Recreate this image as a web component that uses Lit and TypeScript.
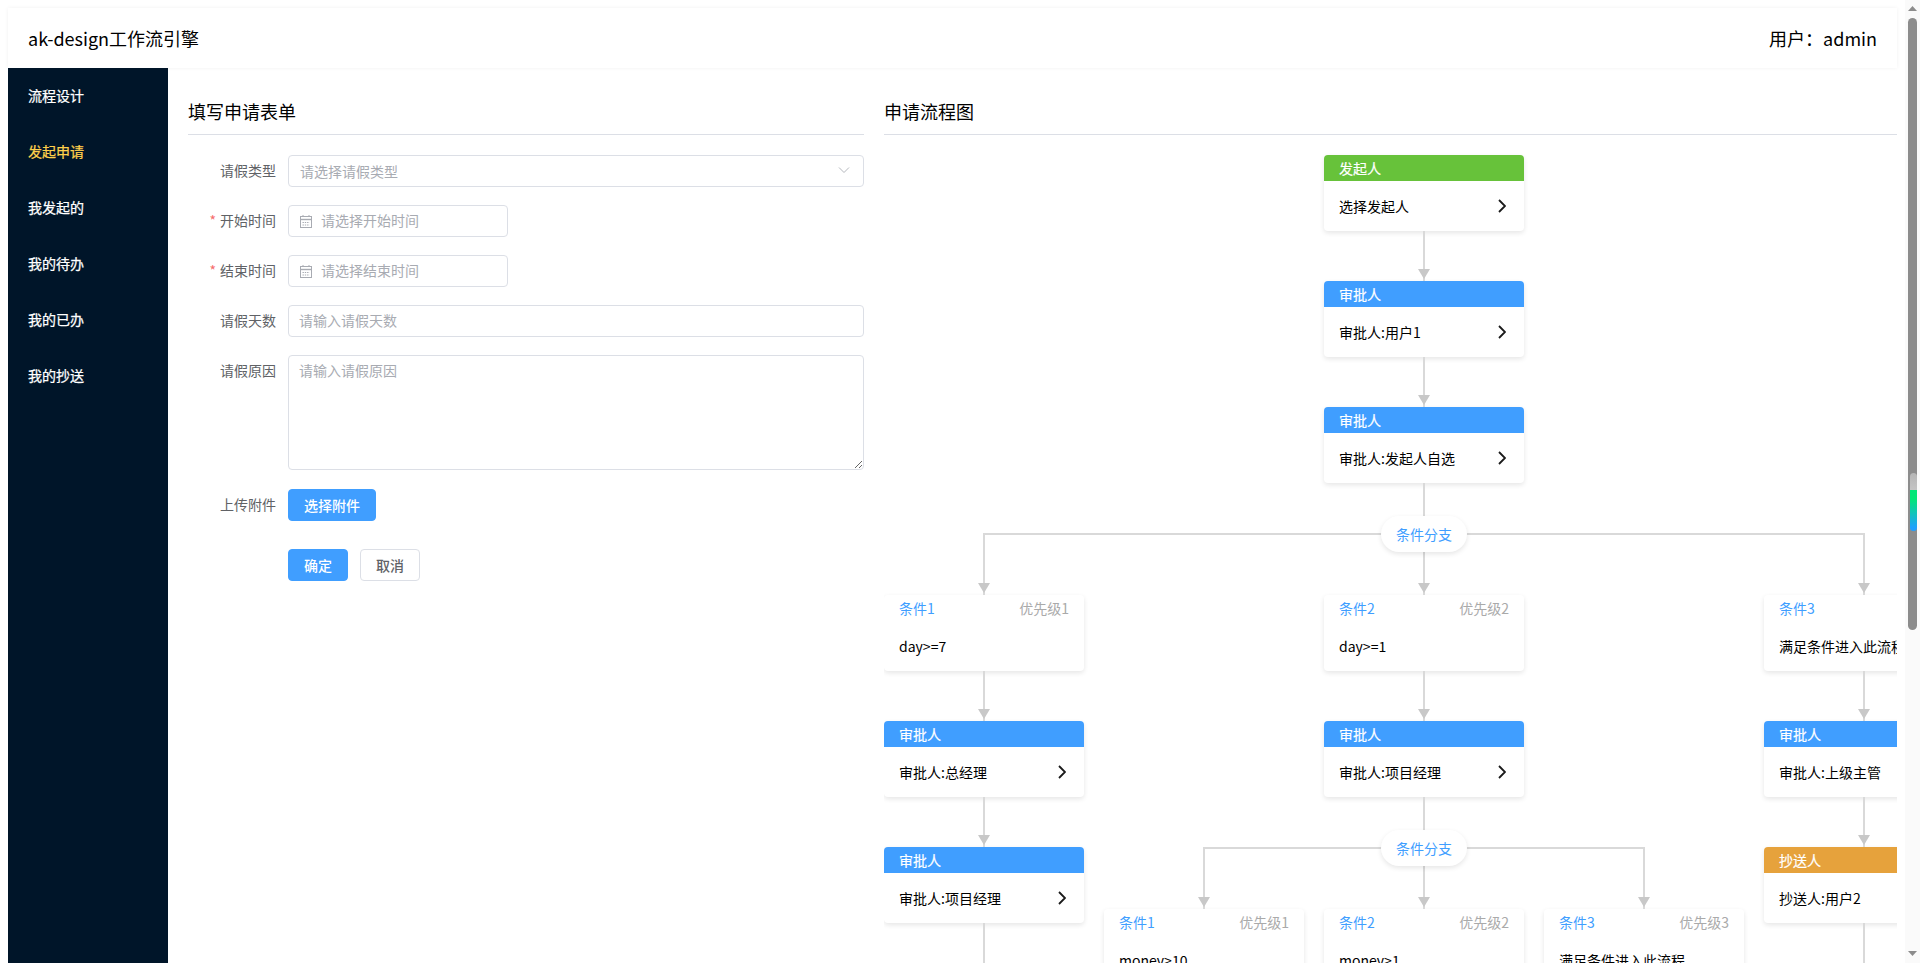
import { LitElement, html, css, nothing } from "lit";
import { customElement } from "lit/decorators.js";

type Tone = "start" | "audit" | "copy";

type Step =
  | { kind: "node"; tone: Tone; title: string; text: string }
  | { kind: "cond"; title: string; level: string; text: string }
  | { kind: "branch"; cols: Step[][] };

const audit = (text: string): Step => ({
  kind: "node",
  tone: "audit",
  title: "审批人",
  text: `审批人:${text}`,
});

const cond = (n: number, text: string): Step => ({
  kind: "cond",
  title: `条件${n}`,
  level: `优先级${n}`,
  text,
});

const flow: Step[] = [
  { kind: "node", tone: "start", title: "发起人", text: "选择发起人" },
  audit("用户1"),
  audit("发起人自选"),
  {
    kind: "branch",
    cols: [
      [cond(1, "day>=7"), audit("总经理"), audit("项目经理")],
      [
        cond(2, "day>=1"),
        audit("项目经理"),
        {
          kind: "branch",
          cols: [
            [cond(1, "money>10")],
            [cond(2, "money>1")],
            [cond(3, "满足条件进入此流程")],
          ],
        },
      ],
      [
        cond(3, "满足条件进入此流程"),
        audit("上级主管"),
        { kind: "node", tone: "copy", title: "抄送人", text: "抄送人:用户2" },
      ],
    ],
  },
];

const menu = ["流程设计", "发起申请", "我发起的", "我的待办", "我的已办", "我的抄送"];

const calendar = html`<svg class="cal" viewBox="0 0 12 13" width="12" height="13" fill="none" stroke="#a8abb2">
  <rect x=".5" y="1.5" width="11" height="11"></rect>
  <path d="M3 0v2M9 0v2" stroke-width="1"></path>
  <path d="M1 4.5h10" stroke-width="1.4"></path>
  <path d="M2.5 7.5h7M2.5 10h7" stroke-dasharray="1.4 .9"></path>
</svg>`;

@customElement("app-root")
export class AppRoot extends LitElement {
  static styles = css`
    :host {
      display: block;
      position: relative;
      box-sizing: border-box;
      height: 100vh;
      overflow: hidden;
      padding: 8px 23px 0 8px;
      background: #fff;
      color: #000;
      font-family: "Noto Sans CJK SC", "Noto Sans", sans-serif;
      font-size: 14px;
    }

    .top {
      display: flex;
      align-items: center;
      justify-content: space-between;
      height: 60px;
      padding: 0 20px;
      font-size: 18px;
      box-shadow: 0 0 4px rgba(0, 0, 0, 0.06);
    }

    .layout {
      display: flex;
    }

    .side {
      flex: 0 0 160px;
      background: #001529;
    }

    .side div {
      height: 56px;
      line-height: 55px;
      padding-left: 20px;
      color: #fff;
      -webkit-text-stroke: 0.25px currentColor;
    }

    .side .on {
      color: #ffd04b;
    }

    .content {
      flex: 1;
      min-width: 0;
      display: flex;
      gap: 20px;
      padding: 20px 0 0 20px;
    }

    .form-panel {
      flex: 0 0 676px;
    }

    .flow-panel {
      flex: 1;
      min-width: 0;
      overflow: hidden;
    }

    h2 {
      margin: 0 0 20px;
      padding: 11px 0;
      font-size: 18px;
      font-weight: 400;
      line-height: 24px;
      border-bottom: 1px solid #dcdfe6;
    }

    .row {
      display: flex;
      margin-bottom: 18px;
    }

    .row label {
      flex: 0 0 100px;
      box-sizing: border-box;
      padding-right: 12px;
      text-align: right;
      line-height: 30px;
      color: #606266;
    }

    .req::before {
      content: "*";
      margin-right: 4px;
      color: #f56c6c;
    }

    .box {
      flex: 1;
      display: flex;
      align-items: center;
      box-sizing: border-box;
      height: 32px;
      padding: 0 11px;
      border: 1px solid #dcdfe6;
      border-radius: 4px;
      background: #fff;
    }

    .box.date {
      flex: 0 0 220px;
    }

    .box span {
      flex: 1;
      color: #a8abb2;
    }

    .box svg.chev {
      margin-right: 2px;
    }

    .box input {
      flex: 1;
      min-width: 0;
      margin-left: -1px;
      padding: 0 0 2px;
      border: 0;
      outline: 0;
      font: inherit;
    }

    .cal {
      margin-right: 10px;
    }

    textarea {
      flex: 1;
      box-sizing: border-box;
      height: 115px;
      padding: 3px 10px;
      border: 1px solid #dcdfe6;
      border-radius: 4px;
      outline: 0;
      font: inherit;
      line-height: 22px;
    }

    ::placeholder {
      color: #a8abb2;
      opacity: 1;
    }

    .upload {
      margin: 19px 0 28px;
    }

    .actions {
      display: flex;
      gap: 12px;
      padding-left: 100px;
    }

    button {
      box-sizing: border-box;
      height: 32px;
      padding: 0 15px;
      border: 1px solid #dcdfe6;
      border-radius: 4px;
      background: #fff;
      color: #606266;
      font: inherit;
      font-weight: 500;
    }

    button.primary {
      border-color: #409eff;
      background: #409eff;
      color: #fff;
    }

    .chain {
      display: flex;
      flex-direction: column;
      align-items: center;
    }

    .tree {
      width: 1080px;
    }

    .card {
      box-sizing: border-box;
      width: 200px;
      height: 76px;
      flex: none;
      border-radius: 4px;
      background: #fff;
      box-shadow: 0 2px 5px rgba(0, 0, 0, 0.1);
      overflow: hidden;
    }

    .head {
      display: flex;
      justify-content: space-between;
      height: 26px;
      padding: 0 15px;
      line-height: 26px;
      color: #fff;
      -webkit-text-stroke: 0.2px #fff;
    }

    .start .head {
      background: #67c23a;
    }

    .audit .head {
      background: #409eff;
    }

    .copy .head {
      background: #e6a23c;
    }

    .cond .head {
      color: #409eff;
      -webkit-text-stroke: 0;
    }

    .cond .head i {
      font-style: normal;
      color: #aaa;
    }

    .body {
      display: flex;
      align-items: center;
      justify-content: space-between;
      height: 50px;
      padding: 0 18px 0 15px;
      white-space: nowrap;
    }

    .link {
      position: relative;
      flex: none;
      width: 2px;
      height: 50px;
      background: #d9d9d9;
    }

    .link::after {
      content: "";
      position: absolute;
      left: -5px;
      bottom: 2px;
      border-left: 6px solid transparent;
      border-right: 6px solid transparent;
      border-top: 10px solid #c8c8c8;
    }

    .plain::after {
      display: none;
    }

    .branch {
      position: relative;
      display: flex;
      flex-direction: column;
      align-items: center;
    }

    .pill {
      position: absolute;
      z-index: 1;
      top: 33px;
      left: 50%;
      transform: translateX(-50%);
      width: 86px;
      height: 36px;
      line-height: 36px;
      text-align: center;
      border-radius: 18px;
      background: #fff;
      color: #409eff;
      box-shadow: 0 2px 5px rgba(0, 0, 0, 0.1);
    }

    .cols {
      display: flex;
      gap: 20px;
    }

    .col {
      display: flex;
      flex-direction: column;
      align-items: center;
    }

    .drop {
      position: relative;
      display: flex;
      justify-content: center;
      align-self: stretch;
    }

    .drop .link {
      height: 62px;
    }

    .drop::before {
      content: "";
      position: absolute;
      top: 0;
      left: -20px;
      right: 0;
      height: 2px;
      background: #d9d9d9;
    }

    .col:first-child > .drop::before {
      left: calc(50% - 1px);
    }

    .col:last-child > .drop::before {
      right: calc(50% - 1px);
    }

    .bar {
      position: absolute;
      top: 0;
      right: 0;
      bottom: 0;
      width: 15px;
      background: #fafafa;
    }

    .thumb {
      position: absolute;
      left: 3px;
      top: 18px;
      width: 9px;
      height: 612px;
      border-radius: 5px;
      background: #8c8c8c;
    }

    .mark {
      position: absolute;
      left: 5px;
      top: 473px;
      width: 7px;
      height: 58px;
      border-radius: 4px;
      background: linear-gradient(#b5b5b5 0, #c4c4c4 29%, #00e676 29%, #00e676 45%, #1e9fff 95%);
    }

    .arrow {
      position: absolute;
      left: 3px;
    }

    .arrow.up {
      top: 6px;
    }

    .arrow.down {
      top: 951px;
    }
  `;

  private renderCard(step: Step) {
    if (step.kind === "node") {
      return html`<div class="card ${step.tone}">
        <div class="head">${step.title}</div>
        <div class="body">
          <span>${step.text}</span>
          <svg width="8" height="14" viewBox="0 0 8 14" fill="none" stroke="#1a1a1a" stroke-width="1.8">
            <path d="M1 1l6 6-6 6"></path>
          </svg>
        </div>
      </div>`;
    }
    if (step.kind === "cond") {
      return html`<div class="card cond">
        <div class="head"><span>${step.title}</span><i>${step.level}</i></div>
        <div class="body"><span>${step.text}</span></div>
      </div>`;
    }
    return nothing;
  }

  private renderBranch(step: Extract<Step, { kind: "branch" }>) {
    return html`<div class="branch">
      <div class="link plain"></div>
      <div class="pill">条件分支</div>
      <div class="cols">
        ${step.cols.map(
          (col) => html`<div class="col">
            <div class="drop"><div class="link"></div></div>
            ${this.renderChain(col, true)}
          </div>`
        )}
      </div>
    </div>`;
  }

  private renderChain(steps: Step[], tail: boolean) {
    return steps.map((step, i) => {
      if (step.kind === "branch") return this.renderBranch(step);
      const next = steps[i + 1];
      const linked = next ? next.kind !== "branch" : tail;
      return html`${this.renderCard(step)}${linked ? html`<div class="link ${next ? "" : "plain"}"></div>` : nothing}`;
    });
  }

  render() {
    return html`
      <div class="top">
        <span>ak-design工作流引擎</span>
        <span>用户：admin</span>
      </div>
      <div class="layout">
        <nav class="side">
          ${menu.map((m) => html`<div class=${m === "发起申请" ? "on" : ""}>${m}</div>`)}
        </nav>
        <div class="content">
          <section class="form-panel">
            <h2>填写申请表单</h2>
            <div class="row">
              <label>请假类型</label>
              <div class="box">
                <span>请选择请假类型</span>
                <svg class="chev" width="12" height="12" viewBox="0 0 12 12" fill="none" stroke="#b4b7bd">
                  <path d="M1 2.5l5 5 5-5"></path>
                </svg>
              </div>
            </div>
            <div class="row">
              <label class="req">开始时间</label>
              <div class="box date">${calendar}<input placeholder="请选择开始时间" /></div>
            </div>
            <div class="row">
              <label class="req">结束时间</label>
              <div class="box date">${calendar}<input placeholder="请选择结束时间" /></div>
            </div>
            <div class="row">
              <label>请假天数</label>
              <div class="box"><input placeholder="请输入请假天数" /></div>
            </div>
            <div class="row">
              <label>请假原因</label>
              <textarea placeholder="请输入请假原因"></textarea>
            </div>
            <div class="row upload">
              <label>上传附件</label>
              <button class="primary">选择附件</button>
            </div>
            <div class="actions">
              <button class="primary">确定</button>
              <button>取消</button>
            </div>
          </section>
          <section class="flow-panel">
            <h2>申请流程图</h2>
            <div class="chain tree">${this.renderChain(flow, false)}</div>
          </section>
        </div>
      </div>
      <div class="bar">
        <svg class="arrow up" width="9" height="5" viewBox="0 0 9 5" fill="#8c8c8c"><path d="M4.5 0L9 5H0z"></path></svg>
        <div class="thumb"></div>
        <div class="mark"></div>
        <svg class="arrow down" width="9" height="5" viewBox="0 0 9 5" fill="#8c8c8c"><path d="M0 0h9L4.5 5z"></path></svg>
      </div>
    `;
  }
}
